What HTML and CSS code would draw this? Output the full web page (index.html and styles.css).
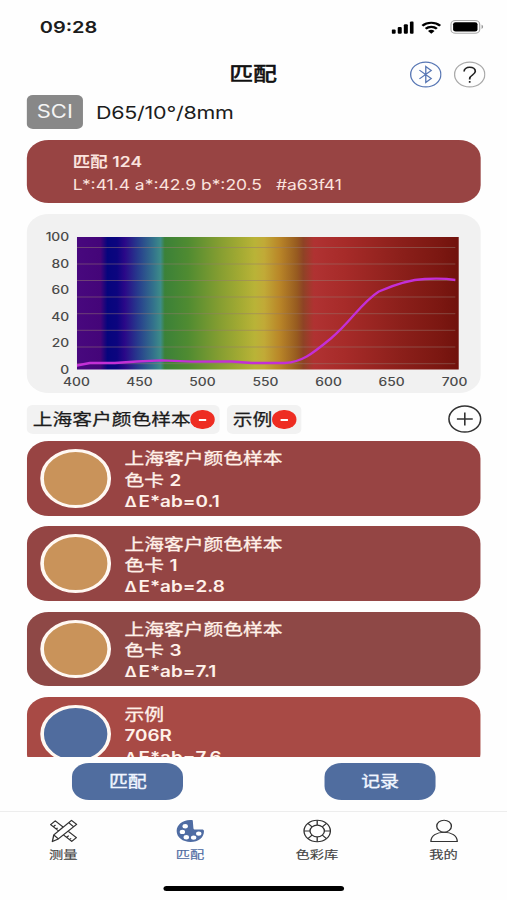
FILE: index.html
```html
<!DOCTYPE html>
<html lang="zh-CN">
<head>
<meta charset="utf-8">
<title>匹配</title>
<link rel="stylesheet" href="styles.css">
</head>
<body>
<div class="screen">
  <div class="status">
    <span class="time">09:28</span>
    <svg class="signal" viewBox="0 0 18.500 13" width="18.5" height="13"><rect x="0" y="8.500" width="3.300" height="4.300" rx="1"/><rect x="5" y="6" width="3.300" height="6.800" rx="1"/><rect x="10" y="3.300" width="3.300" height="9.500" rx="1"/><rect x="15" y=".5" width="3.300" height="12.300" rx="1"/></svg>
    <svg class="wifi" viewBox="0 0 17 13" width="17" height="13"><path d="M1.200 4.700a10.500 10.500 0 0 1 14.600 0M3.900 7.700a6.600 6.600 0 0 1 9.200 0" fill="none" stroke="#000" stroke-width="2.100"/><path d="M8.500 12.700 5.800 10a4 4 0 0 1 5.400 0z"/></svg>
    <svg class="battery" viewBox="0 0 28 14" width="28" height="14"><rect x=".6" y=".6" width="23.600" height="12.600" rx="3.800" fill="none" stroke="#aaa"/><rect x="2.400" y="2.300" width="20" height="9.200" rx="2"/><path d="M25.700 4.800c1.700.7 1.700 3.500 0 4.200z" fill="#999"/></svg>
  </div>

  <header class="header">
    <h1>匹配</h1>
    <svg class="round" viewBox="0 0 26 27" width="26" height="27"><circle cx="13" cy="13.500" r="12.400" stroke="#5877b4"/><path d="m7.800 9.200 9.700 8.300-4.500 4V5.500l4.500 4-9.700 8.300" stroke="#5877b4"/></svg>
    <svg class="round" viewBox="0 0 26 27" width="26" height="27"><circle cx="13" cy="13.500" r="12.400" stroke="#aaa"/><path d="M8.400 10.500c0-2.500 1.900-4.300 4.600-4.300s4.600 1.700 4.600 4.100c0 3.700-4.600 3.700-4.600 7.400v.7M13 20.100v1.700" stroke="#222" stroke-width="1.400"/></svg>
  </header>

  <div class="mode"><span class="badge">SCI</span><span class="cond">D65/10°/8mm</span></div>

  <section class="current">
    <div class="current-name">匹配 124</div>
    <div class="current-lab"><span>L*:41.4 a*:42.9 b*:20.5</span><span>#a63f41</span></div>
  </section>

  <section class="chart">
    <div class="y-axis"><span>100</span><span>80</span><span>60</span><span>40</span><span>20</span><span>0</span></div>
    <svg class="plot" viewBox="0 0 382.500 132.500" preserveAspectRatio="none">
      <defs><linearGradient id="spectrum">
        <stop offset="0" stop-color="#48087e"/><stop offset=".062" stop-color="#440579"/><stop offset=".08" stop-color="#06057d"/><stop offset=".105" stop-color="#0c057f"/><stop offset=".125" stop-color="#2a0888"/><stop offset=".16" stop-color="#273c8d"/><stop offset=".2" stop-color="#33728c"/><stop offset=".219" stop-color="#3d8c89"/><stop offset=".23" stop-color="#3b8138"/><stop offset=".29" stop-color="#4f8b31"/><stop offset=".37" stop-color="#839d31"/><stop offset=".43" stop-color="#a5ab33"/><stop offset=".465" stop-color="#b9b337"/><stop offset=".49" stop-color="#c1aa37"/><stop offset=".53" stop-color="#b98628"/><stop offset=".575" stop-color="#975b20"/><stop offset=".592" stop-color="#8e4325"/><stop offset=".62" stop-color="#b03232"/><stop offset=".7" stop-color="#a72b29"/><stop offset=".85" stop-color="#8b1f1a"/><stop offset=".95" stop-color="#7b1711"/><stop offset="1" stop-color="#70120c"/>
      </linearGradient></defs>
      <rect width="382.500" height="132.500" fill="url(#spectrum)"/>
      <path class="grid-lines" d="M0 10.500h378.500M0 27h378.500M0 43.500h378.500M0 60h378.500M0 76.700h378.500M0 93.300h378.500M0 110h378.500M0 126.700h378.500"/>
      <path class="curve" d="M0 128.500 13 126 38 126 60 124.500 85 123.300 115 124.700 155 124.500 175 126 208 126C225 125 234 118 254 101.500 274 85 284 66 302 54.500 318 47.500 335 42.500 348 42 362 41.300 371 41.800 378.500 43"/>
    </svg>
    <div class="x-axis"><span>400</span><span>450</span><span>500</span><span>550</span><span>600</span><span>650</span><span>700</span></div>
  </section>

  <div class="filters">
    <span class="chip"><span>上海客户颜色样本</span><i class="minus"></i></span>
    <span class="chip"><span>示例</span><i class="minus"></i></span>
    <svg class="add" viewBox="0 0 28 28" width="28" height="28"><circle cx="14" cy="14" r="13"/><path d="M14 7.500v13M7.500 14h13"/></svg>
  </div>

  <main class="list">
    <article class="card tone-a"><div class="swatch tan"></div><div class="info"><div class="cjk">上海客户颜色样本</div><div class="cjk">色卡 <b>2</b></div><div><span class="delta">Δ</span>E*ab=0.1</div></div></article>
    <article class="card tone-b"><div class="swatch tan"></div><div class="info"><div class="cjk">上海客户颜色样本</div><div class="cjk">色卡 <b>1</b></div><div><span class="delta">Δ</span>E*ab=2.8</div></div></article>
    <article class="card tone-c"><div class="swatch tan"></div><div class="info"><div class="cjk">上海客户颜色样本</div><div class="cjk">色卡 <b>3</b></div><div><span class="delta">Δ</span>E*ab=7.1</div></div></article>
    <article class="card tone-d"><div class="swatch blue"></div><div class="info"><div class="cjk">示例</div><div>706R</div><div><span class="delta">Δ</span>E*ab=7.6</div></div></article>
  </main>

  <div class="actions"><button>匹配</button><button>记录</button></div>

  <nav class="tabs">
    <a class="tab"><svg viewBox="0 0 24 24" width="24" height="24"><path d="M5.300 1.800 1.500 5.600 8.300 12.200 11.800 8.200zM16 12.300 22.600 18.600 18.800 22.400 12 15.900M3.800 7.700l1.700-1.700M6 10l1.200-1.200M14.700 18.300l1.600-1.600M17 20.600l1.300-1.300"/><path d="M18.600 1.300 22.800 5.400 7.800 19.900 2.900 22.600 4.100 15.900zM16.300 3.700l4.100 4.100M4.100 15.900l3.700 4" fill="#fff"/></svg><span>测量</span></a>
    <a class="tab active"><svg viewBox="0 0 24 24" width="24" height="24"><path class="solid" d="M14 1.200C6.500-.2.8 5.500.8 12c0 6.400 5 10.900 11.400 10.900 6.500 0 11-4.300 11-10.700 0-1.200-.5-1.700-1.800-1.700h-5.100c-1.300 0-1.800-.5-1.800-1.800z"/><circle class="hole" cx="7.800" cy="7.200" r="2.200"/><circle class="hole" cx="5.500" cy="12.900" r="2.200"/><circle class="hole" cx="8.700" cy="18.200" r="2.200"/><circle class="hole" cx="14.700" cy="18.600" r="2.200"/><circle class="hole" cx="18.900" cy="14.600" r="2.200"/></svg><span>匹配</span></a>
    <a class="tab"><svg viewBox="0 0 24 24" width="24" height="24"><circle cx="12" cy="12" r="10.800"/><circle cx="12" cy="12" r="5.900"/><path d="M12 1.200v4.900M12 17.900v4.900M1.200 12h4.900M17.900 12h4.900M4.400 4.400l3.400 3.400M16.200 16.200l3.400 3.400M19.600 4.400l-3.400 3.400M7.800 16.200l-3.400 3.400"/></svg><span>色彩库</span></a>
    <a class="tab"><svg viewBox="0 0 24 24" width="24" height="24"><circle cx="12" cy="7.200" r="6"/><path d="M1.200 22.500C1.200 16.500 6 13.200 12 13.200s10.800 3.300 10.800 9.300z"/></svg><span>我的</span></a>
  </nav>
  <div class="home"></div>
</div>
</body>
</html>
```

FILE: styles.css
```css
* { box-sizing: border-box; }
html, body { margin: 0; height: 900px; overflow: hidden; background: #fefefe; }
body { font-family: Inter, "Noto Sans CJK SC", sans-serif; color: #1c1c1c; }

.screen {
  width: 415.574px;
  height: 900px;
  display: flex;
  flex-direction: column;
  transform: scaleX(1.22);
  transform-origin: 0 0;
  padding: 0 21.3px 0 22.1px;
}

.status { height: 54px; display: flex; align-items: center; padding: 0 0 0 10.500px; }
.time { flex: 1; font-size: 16.400px; font-weight: 600; }
.signal { margin-right: 6px; }
.wifi { margin-right: 7px; }
.battery { margin-right: -3px; }

.header { height: 41px; display: flex; align-items: center; justify-content: flex-end; gap: 10px; margin-right: -3.300px; }
.header h1 { margin: 0 98.500px 2px 0; font-size: 19.600px; line-height: 38px; font-weight: 400; color: #111; -webkit-text-stroke: .6px #111; }
.round { fill: none; stroke-width: 1.100; }

.mode { height: 34px; display: flex; align-items: center; }
.badge { width: 45.600px; height: 34px; line-height: 34px; text-align: center; border-radius: 5px; background: #888; color: #f4f4f4; font-size: 18px; }
.cond { margin-left: 11px; padding-top: 1px; font-size: 17.600px; letter-spacing: -.2px; }

.current { margin-top: 11px; height: 63px; padding: 10px 0 0 37.500px; border-radius: 18px; background: #984443; color: #fbe3de; line-height: 23px; }
.current-name { font-size: 14.300px; font-weight: 600; letter-spacing: .1px; }
.current-lab { display: flex; gap: 11.500px; font-size: 14.300px; }

.chart {
  margin-top: 11px;
  height: 179px;
  padding: 23px 18px 0 0;
  border-radius: 18px;
  background: #f1f1f1;
  display: grid;
  grid-template: 132.500px 22px / 40.600px 313.500px;
  color: #4a4a4a;
  font-size: 11.300px;
  font-weight: 500;
}
.y-axis { height: 144.500px; margin-top: -6px; padding-right: 6px; display: flex; flex-direction: column; justify-content: space-between; text-align: right; line-height: 12px; }
.plot { width: 313.500px; height: 132.500px; display: block; }
.grid-lines { stroke: #967b70; stroke-opacity: .5; fill: none; }
.curve { stroke: #c32fd6; stroke-width: 2.300; fill: none; stroke-linejoin: round; }
.x-axis { grid-column: 2; width: 341px; margin: 5px 0 0 -15.500px; display: flex; justify-content: space-between; line-height: 14px; }
.x-axis span { width: 31px; text-align: center; }

.filters { margin-top: 12px; height: 29px; display: flex; align-items: center; gap: 6px; }
.chip { height: 29px; padding: 0 4.500px 0 4.700px; display: flex; align-items: center; background: #f2f2f2; border-radius: 5px; font-size: 16.200px; -webkit-text-stroke: .25px #1c1c1c; }
.chip span { line-height: 24px; padding-bottom: 2px; }
.minus { width: 19.400px; height: 19.400px; border-radius: 50%; background: #ee2d22; display: flex; align-items: center; justify-content: center; }
.minus::after { content: ""; width: 6.300px; height: 2px; margin-top: 2px; background: #fff; }
.add { margin: -1px -.8px 0 auto; fill: none; stroke: #333; stroke-width: 1.300; }

.list { margin-top: 7px; height: 316px; overflow: hidden; display: flex; flex-direction: column; gap: 10.800px; }
.card { flex: 0 0 74.500px; padding: 0 10.700px; display: flex; align-items: center; gap: 10.700px; border-radius: 18px; color: #fff1e9; }
.tone-a { background: #984443; }
.tone-b { background: #944544; }
.tone-c { background: #8e4846; }
.tone-d { background: #a84a45; }
.swatch { width: 58.500px; height: 58.500px; border: 3.500px solid #fff8f2; border-radius: 50%; }
.tan { background: #c9935a; }
.blue { background: #506c9e; }
.info { font-size: 15.500px; line-height: 21.300px; font-weight: 600; padding-top: 4px; }
.info div { height: 21.300px; }
.info .cjk { font-size: 16.200px; font-weight: 400; -webkit-text-stroke: .3px #fff1e9; }
.info b { font-weight: 600; font-size: 15.500px; -webkit-text-stroke: 0; }
.delta { display: inline-block; width: 11.500px; font-size: 14px; }

.actions { margin-top: 6px; height: 37px; padding: 0 37.200px; display: flex; justify-content: space-between; }
.actions button { width: 91px; height: 37px; padding: 0; border: 0; border-radius: 14px; background: #506d9f; color: #f1f6ff; font: 400 15.500px/37px Inter, "Noto Sans CJK SC", sans-serif; -webkit-text-stroke: .4px #f1f6ff; }

.tabs { margin: 10.500px -21.300px 0 -22.100px; height: 75px; border-top: 1px solid #ededed; padding: 7.500px 0 0; display: flex; }
.tab { flex: 1; display: flex; flex-direction: column; align-items: center; font-size: 11.700px; line-height: 17px; color: #444; gap: 4px; -webkit-text-stroke: .15px currentColor; }
.tab svg { fill: none; stroke: #333; stroke-width: 1.100; stroke-linejoin: round; }
.tab.active { color: #4f6ca3; }
.tab .solid { fill: #4f6ca3; stroke: none; }
.tab .hole { fill: #fff; stroke: none; }
.home { width: 147.500px; height: 5px; margin: auto auto 9px; border-radius: 3px; background: #000; flex: none; }
```
